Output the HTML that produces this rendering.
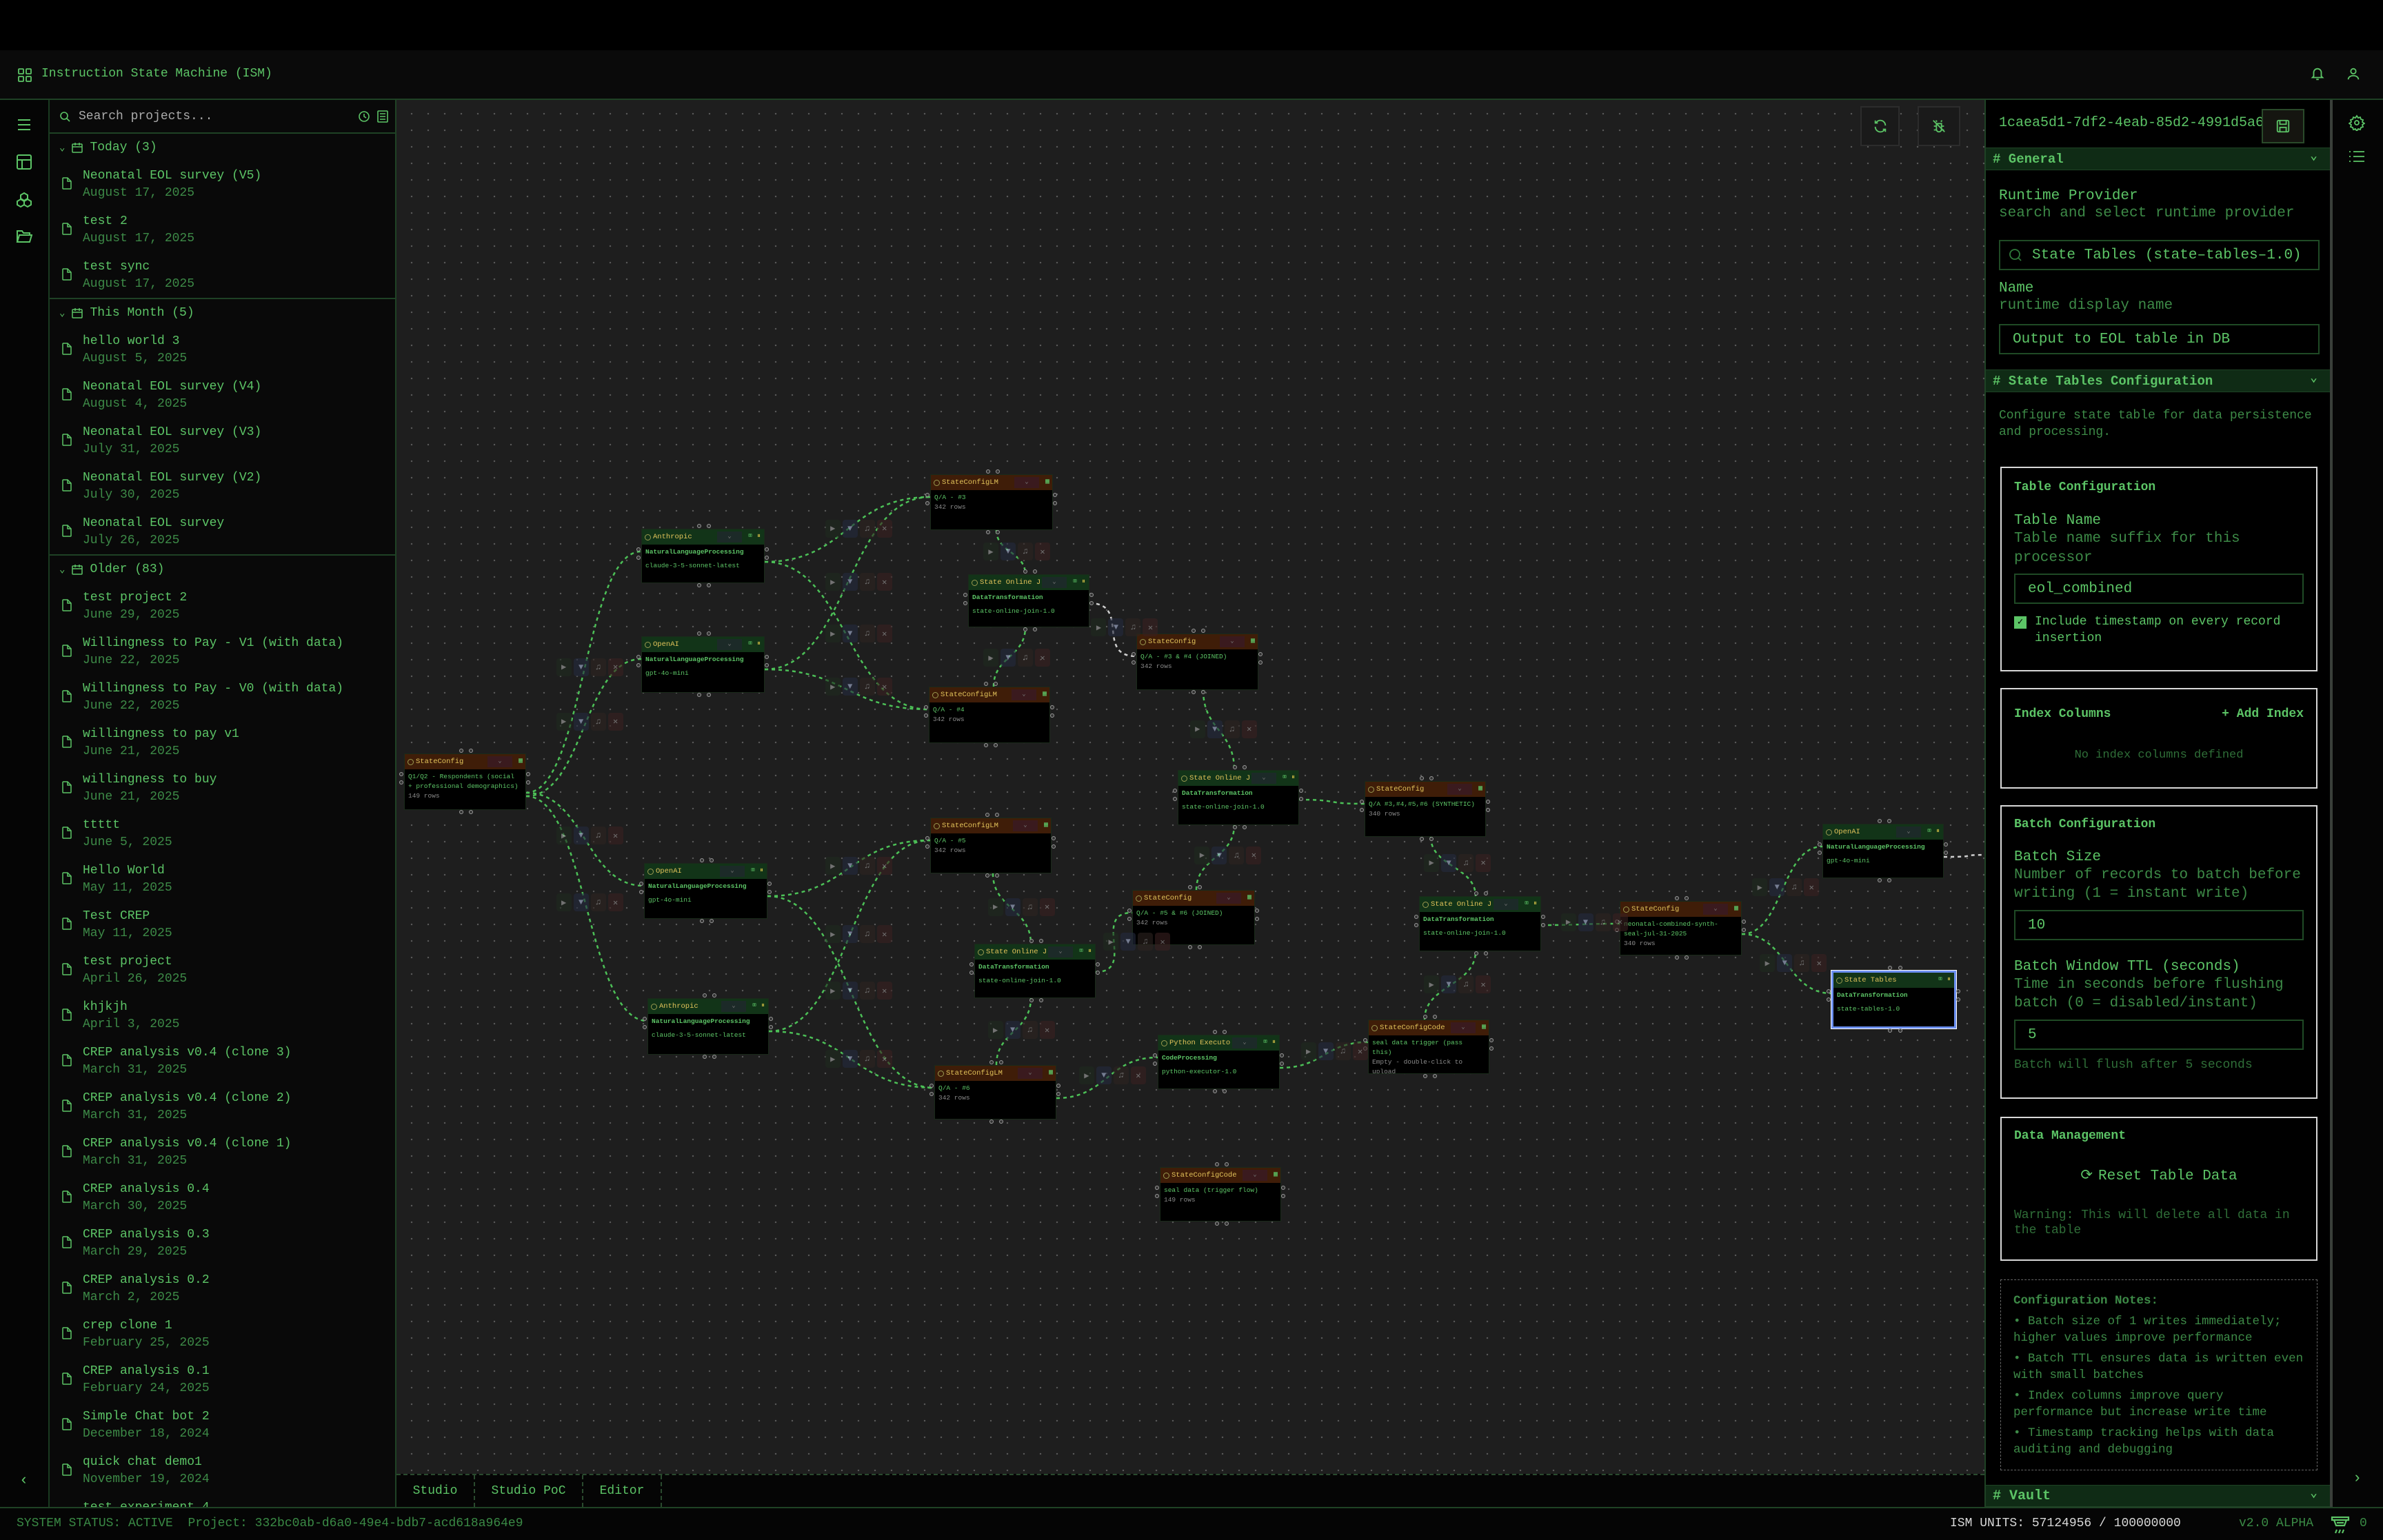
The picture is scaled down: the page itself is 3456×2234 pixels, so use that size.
<!DOCTYPE html>
<html><head><meta charset="utf-8">
<style>
*{box-sizing:border-box;margin:0;padding:0}
body{width:3456px;height:2234px;background:#000;font-family:"Liberation Mono",monospace;color:#5cc466;position:relative;overflow:hidden}
.abs{position:absolute}
#top{left:0;top:0;width:3456px;height:73px;background:#000}
#hdr{left:0;top:73px;width:3456px;height:72px;background:#0a0a0a;border-bottom:2px solid #1f4225}
#rail{left:0;top:145px;width:72px;height:2041px;background:#050505;border-right:2px solid #1a3a20}
#side{left:72px;top:145px;width:503px;height:2041px;background:#090909;border-right:2px solid #1f4225;overflow:hidden}
#canvas{left:575px;top:145px;width:2303px;height:1993px;background-color:#1e1e1e;background-image:radial-gradient(circle,#5a5a5a 1px,transparent 1.4px);background-size:24px 24px;background-position:10px 8px;overflow:hidden}
#tabs{left:575px;top:2138px;width:2303px;height:48px;background:#050505;border-top:2px dashed #2a4a2e}
#status{left:0;top:2186px;width:3456px;height:48px;background:#050505;border-top:2px solid #1f4225}
#rp{left:2878px;top:145px;width:505px;height:2041px;background:#000;border-left:2px solid #1f4225;border-right:4px solid #3a3f3a;overflow:hidden}
#rr{left:3383px;top:145px;width:73px;height:2041px;background:#050505}
.srow{height:49px;border-bottom:2px solid #1f4225;display:flex;align-items:center;padding-left:14px;font-size:18px;color:#aaa}
.gh{height:40px;display:flex;align-items:center;padding-left:14px;font-size:18px;color:#5cc466}
.it{height:66px;position:relative;padding-left:48px;padding-top:9px;font-size:18px;line-height:25px}
.it .d{color:#3d8a47}
.it svg{position:absolute;left:18px;top:23px}
.gsep{border-bottom:2px solid #1f4225}
.sec{position:absolute;height:33px;background:#0f2b15;border-top:1px solid #1f4225;border-bottom:1px solid #1f4225;font-weight:bold;font-size:19px;display:flex;align-items:center;padding-left:10px;color:#5cc466}
.sec:after{content:"⌄";position:absolute;right:18px;top:0px;font-size:18px}
.lbl{font-size:21px;color:#5cc466;line-height:25px}
.sub{font-size:21px;color:#3d8a47;line-height:26px}
.inp{border:2px solid #1f4a25;height:44px;display:flex;align-items:center;padding-left:18px;font-size:21px;color:#5cc466}
.box{position:absolute;left:21px;width:460px;border:2px solid #d8d8d8;padding:0 18px}
.bt{font-weight:bold;font-size:18px;color:#5cc466}
.n{position:absolute;background:#000;border:1px solid #1a2a1a;font-size:9.5px;line-height:14px}
.n .h{height:22px;display:flex;align-items:center;padding-left:4px;color:#e2c35a;font-size:10.5px;gap:3px}
.n.o .h{background:#3f1d08}
.n.gr .h{background:#123418}
.n .h .ic{width:9px;height:9px;border:1px solid #9a9a50;border-radius:50%;flex:none}
.n .h .t{flex:1;white-space:nowrap;overflow:hidden}
.n .h .dd{width:36px;height:16px;background:#3a1a1e;color:#777;text-align:center;font-size:9px;line-height:14px;margin-right:6px}
.n.gr .h .dd{background:#1c2a28}
.n .h .x{color:#5cc466;margin-right:4px;font-size:10px}
.n .h .y{color:#c0b040;margin-right:5px;font-size:10px}
.n .b{padding:4px 5px;color:#5cc466}
.n .b .r{color:#8a8a8a}
.n .b .s{font-weight:bold}
.p{position:absolute;width:6px;height:6px;border-radius:50%;background:#333;border:1px solid #999}
.cg{position:absolute;display:flex;gap:3px;opacity:.6}
.cg span{width:22px;height:26px;border-radius:4px;display:flex;align-items:center;justify-content:center;font-size:12px;color:#aaa}
.cg .a{background:#1f2a1f}.cg .f{background:#242a3e;color:#b0bce0}.cg .bl{background:#2e2420}.cg .c{background:#3a2020}
.tab{position:absolute;top:0;height:46px;display:flex;align-items:center;font-size:18px;color:#5cc466;border-right:2px dashed #2a4a2e}
</style></head><body>
<div id="top" class="abs"></div>
<div id="hdr" class="abs">
 <svg class="abs" style="left:26px;top:26px" width="20" height="20" viewBox="0 0 20 20" fill="none" stroke="#5cc466" stroke-width="1.8"><rect x="1" y="1" width="7" height="7" rx="1"/><rect x="12" y="1" width="7" height="7" rx="1"/><rect x="1" y="12" width="7" height="7" rx="1"/><rect x="12" y="12" width="7" height="7" rx="1"/></svg>
 <div class="abs" style="left:60px;top:24px;font-size:18px;color:#5cc466">Instruction State Machine (ISM)</div>
 <svg class="abs" style="left:3350px;top:22px" width="22" height="24" viewBox="0 0 24 24" fill="none" stroke="#5cc466" stroke-width="2"><path d="M6 16V10a6 6 0 0 1 12 0v6l2 2H4z"/><path d="M10 21h4"/></svg>
 <svg class="abs" style="left:3402px;top:22px" width="22" height="24" viewBox="0 0 24 24" fill="none" stroke="#5cc466" stroke-width="2"><circle cx="12" cy="8" r="4"/><path d="M4 21c0-4 4-6 8-6s8 2 8 6"/></svg>
</div>

<div id="rail" class="abs">
 <svg class="abs" style="left:24px;top:26px" width="22" height="20" viewBox="0 0 22 20" stroke="#5cc466" stroke-width="2"><path d="M2 3h18M2 10h18M2 17h18"/></svg>
 <svg class="abs" style="left:24px;top:79px" width="22" height="22" viewBox="0 0 22 22" fill="none" stroke="#5cc466" stroke-width="2"><rect x="1" y="1" width="20" height="20" rx="2"/><path d="M1 8h20M8 8v13"/></svg>
 <svg class="abs" style="left:23px;top:133px" width="24" height="24" viewBox="0 0 24 24" fill="none" stroke="#5cc466" stroke-width="2"><path d="M12 2l5 3v5l-5 3-5-3V5z"/><path d="M7 11l5 3v5l-5 3-5-3v-5z"/><path d="M17 11l5 3v5l-5 3-5-3v-5z"/></svg>
 <svg class="abs" style="left:23px;top:187px" width="24" height="22" viewBox="0 0 24 22" fill="none" stroke="#5cc466" stroke-width="2"><path d="M2 19V3h7l2 3h9v3"/><path d="M2 19l3-10h18l-3 10z"/></svg>
 <div class="abs" style="left:28px;top:1990px;font-size:22px;color:#5cc466">‹</div>
</div>

<div id="side" class="abs">
 <div class="srow"><svg width="16" height="16" viewBox="0 0 16 16" fill="none" stroke="#5cc466" stroke-width="1.6"><circle cx="7" cy="7" r="5"/><path d="M11 11l4 4"/></svg><span style="margin-left:12px;flex:1">Search projects...</span>
 <svg width="18" height="18" viewBox="0 0 18 18" fill="none" stroke="#5cc466" stroke-width="1.6"><circle cx="9" cy="9" r="7"/><path d="M9 5v4l3 2"/></svg>
 <svg style="margin:0 10px 0 10px" width="16" height="18" viewBox="0 0 16 18" fill="none" stroke="#5cc466" stroke-width="1.6"><rect x="1" y="1" width="14" height="16" rx="1"/><path d="M4 5h8M4 9h8M4 13h8"/></svg></div>
 <div id="list"></div>
</div>

<div id="canvas" class="abs">
 <svg class="abs" style="left:0;top:0" width="2303" height="1993" id="edges"></svg>
 <div class="abs" style="left:2123px;top:9px;width:57px;height:58px;border:2px solid #2c2c2c;background:#1a1a1a;display:flex;align-items:center;justify-content:center"><svg width="22" height="22" viewBox="0 0 24 24" fill="none" stroke="#5cc466" stroke-width="2"><path d="M20 11A8 8 0 0 0 5 7M4 3v4h4M4 13a8 8 0 0 0 15 4M20 21v-4h-4"/></svg></div>
 <div class="abs" style="left:2206px;top:9px;width:62px;height:58px;border:2px solid #2c2c2c;background:#1a1a1a;display:flex;align-items:center;justify-content:center"><svg width="22" height="22" viewBox="0 0 24 24" fill="none" stroke="#5cc466" stroke-width="2"><path d="M8 8h8v9a4 4 0 0 1-8 0z"/><path d="M9 5l-2-2M15 5l2-2M4 12h4M16 12h4M4 18h4M16 18h4M3 3l18 18"/></svg></div>
 <div id="nodes"></div>
</div>

<div id="tabs" class="abs">
 <div class="tab" style="left:0;width:114px;justify-content:center">Studio</div>
 <div class="tab" style="left:114px;width:157px;justify-content:center">Studio PoC</div>
 <div class="tab" style="left:271px;width:114px;justify-content:center">Editor</div>
</div>

<div id="rp" class="abs">
 <div class="abs" style="left:19px;top:22px;font-size:20px;color:#5cc466;white-space:nowrap">1caea5d1-7df2-4eab-85d2-4991d5a689a5</div>
 <div class="abs" style="left:400px;top:13px;width:62px;height:50px;background:#151510;border:2px solid #2a4a2a;display:flex;align-items:center;justify-content:center"><svg width="22" height="22" viewBox="0 0 24 24" fill="none" stroke="#5cc466" stroke-width="2"><rect x="3" y="3" width="18" height="18" rx="2"/><path d="M7 3v6h10V3M7 21v-7h10v7"/></svg></div>
 <div class="sec" style="left:0;top:69px;width:499px"># General</div>
 <div class="abs" style="left:19px;top:127px"><div class="lbl">Runtime Provider</div><div class="sub">search and select runtime provider</div></div>
 <div class="inp abs" style="left:19px;top:203px;width:465px;padding-left:12px"><svg width="20" height="20" viewBox="0 0 20 20" fill="none" stroke="#2f7a3a" stroke-width="1.8"><circle cx="9" cy="9" r="7"/><path d="M14 14l4 4"/></svg><span style="margin-left:14px">State Tables (state–tables–1.0)</span></div>
 <div class="abs" style="left:19px;top:261px"><div class="lbl">Name</div><div class="sub">runtime display name</div></div>
 <div class="inp abs" style="left:19px;top:325px;width:465px">Output to EOL table in DB</div>
 <div class="sec" style="left:0;top:391px;width:499px"># State Tables Configuration</div>
 <div class="abs" style="left:19px;top:446px;font-size:18px;line-height:24px;color:#3d8a47;width:470px">Configure state table for data persistence and processing.</div>

 <div class="box" style="top:532px;height:297px">
  <div class="bt" style="margin-top:18px">Table Configuration</div>
  <div class="lbl" style="margin-top:26px">Table Name</div>
  <div class="sub" style="line-height:28px">Table name suffix for this processor</div>
  <div class="inp" style="margin-top:8px">eol_combined</div>
  <div style="display:flex;margin-top:14px;font-size:18px;line-height:24px"><span style="flex:none;width:18px;height:18px;background:#5cc466;margin:4px 12px 0 0;color:#000;font-size:14px;line-height:18px;text-align:center">✓</span><span>Include timestamp on every record insertion</span></div>
 </div>
 <div class="box" style="top:853px;height:146px">
  <div style="display:flex;justify-content:space-between;margin-top:26px" class="bt"><span>Index Columns</span><span>+ Add Index</span></div>
  <div style="text-align:center;margin-top:40px;font-size:17px;color:#2f6e38">No index columns defined</div>
 </div>
 <div class="box" style="top:1023px;height:426px">
  <div class="bt" style="margin-top:16px">Batch Configuration</div>
  <div class="lbl" style="margin-top:25px">Batch Size</div>
  <div class="sub" style="line-height:27px">Number of records to batch before writing (1 = instant write)</div>
  <div class="inp" style="margin-top:10px">10</div>
  <div class="lbl" style="margin-top:26px">Batch Window TTL (seconds)</div>
  <div class="sub" style="line-height:27px">Time in seconds before flushing batch (0 = disabled/instant)</div>
  <div class="inp" style="margin-top:10px">5</div>
  <div style="margin-top:12px;font-size:18px;color:#2f6e38">Batch will flush after 5 seconds</div>
 </div>
 <div class="box" style="top:1475px;height:209px">
  <div class="bt" style="margin-top:16px">Data Management</div>
  <div style="text-align:center;margin-top:34px;font-size:21px;color:#5cc466"><span style="display:inline-block;margin-right:8px">⟳</span>Reset Table Data</div>
  <div style="margin-top:34px;font-size:18px;line-height:22px;color:#2f6e38">Warning: This will delete all data in the table</div>
 </div>
 <div class="abs" style="left:21px;top:1711px;width:460px;height:277px;border:1.5px dashed #666;padding:18px 18px;font-size:17.5px;line-height:24px;color:#3d8a47">
  <div style="font-weight:bold;margin-bottom:6px">Configuration Notes:</div>
  <div style="margin-bottom:6px">•  Batch size of 1 writes immediately; higher values improve performance</div>
  <div style="margin-bottom:6px">•  Batch TTL ensures data is written even with small batches</div>
  <div style="margin-bottom:6px">•  Index columns improve query performance but increase write time</div>
  <div>•  Timestamp tracking helps with data auditing and debugging</div>
 </div>
 <div class="sec" style="left:0;top:2009px;width:499px;height:32px;font-size:20px"># Vault</div>
</div>

<div id="rr" class="abs">
 <svg class="abs" style="left:23px;top:21px" width="24" height="24" viewBox="0 0 24 24" fill="none" stroke="#5cc466" stroke-width="1.8"><circle cx="12" cy="12" r="3"/><path d="M12 2l2 3 3-1 1 3 3 1-1 3 3 2-3 2 1 3-3 1-1 3-3-1-2 3-2-3-3 1-1-3-3-1 1-3-3-2 3-2-1-3 3-1 1-3 3 1z"/></svg>
 <svg class="abs" style="left:23px;top:72px" width="24" height="20" viewBox="0 0 24 20" stroke="#5cc466" stroke-width="1.8"><path d="M7 3h16M7 10h16M7 17h16M1 3h2M1 10h2M1 17h2"/></svg>
 <div class="abs" style="left:29px;top:1987px;font-size:22px;color:#5cc466">›</div>
</div>

<div id="status" class="abs">
 <div class="abs" style="left:24px;top:12px;font-size:18px;color:#3a8a45;white-space:pre">SYSTEM STATUS: ACTIVE  Project: 332bc0ab-d6a0-49e4-bdb7-acd618a964e9</div>
 <div class="abs" style="left:2828px;top:12px;font-size:18px;color:#d8d8d8">ISM UNITS: 57124956 / 100000000</div>
 <div class="abs" style="left:3247px;top:12px;font-size:18px;color:#3a8a45">v2.0 ALPHA</div>
 <svg class="abs" style="left:3380px;top:10px" width="28" height="30" viewBox="0 0 28 30" fill="none" stroke="#5cc466" stroke-width="2.2"><path d="M2 3h24v4H2zM5 7l3 8h12l3-8M9 11h10"/><path d="M9 21l-2 5M14 21l-2 5M19 21l-2 5"/></svg>
 <div class="abs" style="left:3422px;top:12px;font-size:18px;color:#3a8a45">0</div>
</div>

<script>
const groups=[["Today (3)",[["Neonatal EOL survey (V5)","August 17, 2025"],["test 2","August 17, 2025"],["test sync","August 17, 2025"]]],
["This Month (5)",[["hello world 3","August 5, 2025"],["Neonatal EOL survey (V4)","August 4, 2025"],["Neonatal EOL survey (V3)","July 31, 2025"],["Neonatal EOL survey (V2)","July 30, 2025"],["Neonatal EOL survey","July 26, 2025"]]],
["Older (83)",[["test project 2","June 29, 2025"],["Willingness to Pay - V1 (with data)","June 22, 2025"],["Willingness to Pay - V0 (with data)","June 22, 2025"],["willingness to pay v1","June 21, 2025"],["willingness to buy","June 21, 2025"],["ttttt","June 5, 2025"],["Hello World","May 11, 2025"],["Test CREP","May 11, 2025"],["test project","April 26, 2025"],["khjkjh","April 3, 2025"],["CREP analysis v0.4 (clone 3)","March 31, 2025"],["CREP analysis v0.4 (clone 2)","March 31, 2025"],["CREP analysis v0.4 (clone 1)","March 31, 2025"],["CREP analysis 0.4","March 30, 2025"],["CREP analysis 0.3","March 29, 2025"],["CREP analysis 0.2","March 2, 2025"],["crep clone 1","February 25, 2025"],["CREP analysis 0.1","February 24, 2025"],["Simple Chat bot 2","December 18, 2024"],["quick chat demo1","November 19, 2024"],["test experiment 4","November 2, 2024"]]]];
const file='<svg width="14" height="18" viewBox="0 0 14 18" fill="none" stroke="#5cc466" stroke-width="1.5"><path d="M1 2a1 1 0 0 1 1-1h6l5 5v10a1 1 0 0 1-1 1H2a1 1 0 0 1-1-1z"/><path d="M8 1v5h5"/></svg>';
const cal='<svg width="16" height="16" viewBox="0 0 16 16" fill="none" stroke="#5cc466" stroke-width="1.5"><rect x="1" y="3" width="14" height="12" rx="1"/><path d="M1 7h14M5 1v4M11 1v4"/></svg>';
let h='';groups.forEach((g,i)=>{h+='<div class="'+(i<2?'gsep':'')+'"><div class="gh"><span style="margin-right:10px;font-size:14px">⌄</span>'+cal+'<span style="margin-left:10px">'+g[0]+'</span></div>';g[1].forEach(it=>{h+='<div class="it">'+file+'<div>'+it[0]+'</div><div class="d">'+it[1]+'</div></div>'});h+='</div>'});
document.getElementById('list').innerHTML=h;

const OX=575,OY=145;
const N=[
["o",586,1093,177,82,"StateConfig",['<div>Q1/Q2 - Respondents (social + professional demographics)</div>','<div class="r">149 rows</div>']],
["gr",930,767,179,79,"Anthropic",['<div class="s">NaturalLanguageProcessing</div>','<div style="margin-top:6px">claude-3-5-sonnet-latest</div>']],
["gr",930,923,179,82,"OpenAI",['<div class="s">NaturalLanguageProcessing</div>','<div style="margin-top:6px">gpt-4o-mini</div>']],
["gr",934,1252,179,81,"OpenAI",['<div class="s">NaturalLanguageProcessing</div>','<div style="margin-top:6px">gpt-4o-mini</div>']],
["gr",939,1448,176,82,"Anthropic",['<div class="s">NaturalLanguageProcessing</div>','<div style="margin-top:6px">claude-3-5-sonnet-latest</div>']],
["o",1349,688,178,81,"StateConfigLM",['<div>Q/A - #3</div>','<div class="r">342 rows</div>']],
["gr",1404,833,176,77,"State Online Join",['<div class="s">DataTransformation</div>','<div style="margin-top:6px">state-online-join-1.0</div>']],
["o",1347,996,176,82,"StateConfigLM",['<div>Q/A - #4</div>','<div class="r">342 rows</div>']],
["o",1648,919,177,82,"StateConfig",['<div>Q/A - #3 &amp; #4 (JOINED)</div>','<div class="r">342 rows</div>']],
["o",1349,1186,176,81,"StateConfigLM",['<div>Q/A - #5</div>','<div class="r">342 rows</div>']],
["gr",1708,1117,176,80,"State Online Join",['<div class="s">DataTransformation</div>','<div style="margin-top:6px">state-online-join-1.0</div>']],
["o",1979,1133,176,81,"StateConfig",['<div>Q/A #3,#4,#5,#6 (SYNTHETIC)</div>','<div class="r">340 rows</div>']],
["o",1642,1291,178,80,"StateConfig",['<div>Q/A - #5 &amp; #6 (JOINED)</div>','<div class="r">342 rows</div>']],
["gr",1413,1369,176,79,"State Online Join",['<div class="s">DataTransformation</div>','<div style="margin-top:6px">state-online-join-1.0</div>']],
["gr",2058,1300,177,80,"State Online Join",['<div class="s">DataTransformation</div>','<div style="margin-top:6px">state-online-join-1.0</div>']],
["o",2349,1307,177,79,"StateConfig",['<div>neonatal-combined-synth-seal-jul-31-2025</div>','<div class="r">340 rows</div>']],
["gr",2643,1195,176,79,"OpenAI",['<div class="s">NaturalLanguageProcessing</div>','<div style="margin-top:6px">gpt-4o-mini</div>']],
["gr",2656,1408,181,84,"State Tables",['<div class="s">DataTransformation</div>','<div style="margin-top:6px">state-tables-1.0</div>'],1],
["o",1355,1545,177,79,"StateConfigLM",['<div>Q/A - #6</div>','<div class="r">342 rows</div>']],
["gr",1679,1501,177,79,"Python Executor",['<div class="s">CodeProcessing</div>','<div style="margin-top:6px">python-executor-1.0</div>']],
["o",1984,1479,176,79,"StateConfigCode",['<div>seal data trigger (pass this)</div>','<div class="r">Empty - double-click to upload</div>']],
["o",1682,1693,176,79,"StateConfigCode",['<div>seal data (trigger flow)</div>','<div class="r">149 rows</div>']]
];
let nh='';
N.forEach(n=>{const[k,x,y,w,hh,t,b,sel]=n;const X=x-OX,Y=y-OY;
 const right=k=='o'?'<span class="x">▦</span>':'<span class="x">⌧</span><span class="y">⏸</span>';
 nh+='<div class="n '+k+'" style="left:'+X+'px;top:'+Y+'px;width:'+w+'px;height:'+hh+'px;overflow:hidden;'+(sel?'border:3px solid #6b8ff0;outline:1px solid #fff':'')+'"><div class="h"><i class="ic"></i><span class="t">'+t+'</span>'+(sel?'':'<span class="dd">⌄</span>')+right+'</div><div class="b">'+b.join('')+'</div></div>';
 const cx=X+w*0.47,cx2=X+w*0.55;
 [[cx,Y-4],[cx2,Y-4],[cx,Y+hh+3],[cx2,Y+hh+3],[X-4,Y+30],[X-4,Y+42],[X+w+3,Y+30],[X+w+3,Y+42]].forEach(p=>{nh+='<i class="p" style="left:'+(p[0]-3)+'px;top:'+(p[1]-3)+'px"></i>'});
});
const CG=[[366,439],[366,475],[366,550],[366,594],[543,348],[543,383],[543,417],[543,452],[543,570],[543,615],[543,652],[543,697],[647,363],[647,433],[650,597],[650,678],[718,413],[783,480],[786,563],[937,568],[937,648],[1027,607],[1153,584],[1158,634],[856,692],[710,708],[726,620]];
CG.forEach(c=>{const X=c[0]*2.204-OX,Y=c[1]*2.204-OY-13;nh+='<div class="cg" style="left:'+X+'px;top:'+Y+'px"><span class="a">▶</span><span class="f">▼</span><span class="bl">♫</span><span class="c">✕</span></div>'});
document.getElementById('nodes').innerHTML=nh;

function H(a,b,col){const x1=a[0]-OX,y1=a[1]-OY,x2=b[0]-OX,y2=b[1]-OY,d=Math.max(60,Math.abs(x2-x1)/2);return '<path d="M'+x1+' '+y1+' C'+(x1+d)+' '+y1+','+(x2-d)+' '+y2+','+x2+' '+y2+'" stroke="'+(col||'#4cc057')+'"/>'}
function V(a,b,col){const x1=a[0]-OX,y1=a[1]-OY,x2=b[0]-OX,y2=b[1]-OY,d=Math.abs(y2-y1)/2;const s=y2>y1?1:-1;return '<path d="M'+x1+' '+y1+' C'+x1+' '+(y1+s*d)+','+x2+' '+(y2-s*d)+','+x2+' '+y2+'" stroke="'+(col||'#4cc057')+'"/>'}
let e='';
const Aout=[763,1150];
e+=H(Aout,[930,800])+H([763,1155],[930,956])+H(Aout,[934,1285])+H([763,1155],[939,1481]);
e+=H([1109,815],[1349,721])+H([1109,815],[1347,1029])+H([1109,971],[1349,721])+H([1109,971],[1347,1029]);
e+=H([1113,1300],[1349,1219])+H([1113,1300],[1355,1578])+H([1115,1496],[1349,1219])+H([1115,1496],[1355,1578]);
e+=V([1445,769],[1487,833])+V([1441,996],[1487,910]);
e+=H([1580,875],[1648,952],'#cfcfcf');
e+=V([1745,1001],[1790,1117]);
e+=V([1440,1267],[1495,1369])+V([1445,1545],[1495,1448]);
e+=H([1589,1410],[1642,1324]);
e+=V([1735,1291],[1790,1197]);
e+=H([1884,1160],[1979,1166]);
e+=V([2075,1214],[2140,1300])+V([2066,1479],[2140,1380]);
e+=H([2235,1342],[2349,1340]);
e+=H([2526,1355],[2643,1228])+H([2526,1355],[2656,1441]);
e+=H([2819,1243],[2890,1240],'#cfcfcf');
e+=H([1532,1593],[1679,1534])+H([1856,1549],[1984,1512]);
document.getElementById('edges').innerHTML='<g fill="none" stroke-width="2.5" stroke-dasharray="5 5">'+e+'</g>';
</script>
</body></html>
